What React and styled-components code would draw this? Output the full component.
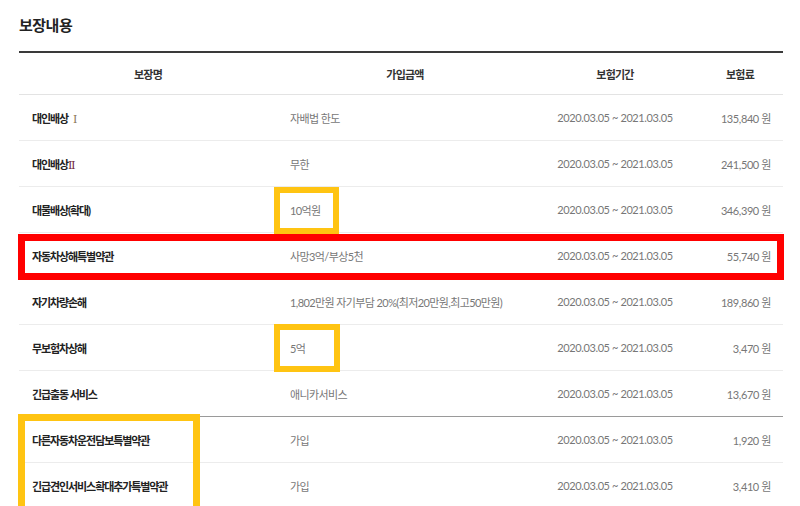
import React from 'react';
import styled, { createGlobalStyle } from 'styled-components';

const GlobalStyle = createGlobalStyle`
  html, body {
    margin: 0;
    padding: 0;
    background: #fff;
    overflow: hidden;
  }
  body {
    font-family: "Lato", "Noto Sans CJK KR", sans-serif;
    color: #333;
  }
`;

const coverages = [
  { name: '대인배상', numeral: 'Ⅰ', spaced: true, amount: '자배법 한도', premium: '135,840' },
  { name: '대인배상', numeral: 'Ⅱ', amount: '무한', premium: '241,500' },
  { name: '대물배상(확대)', amount: '10억원', premium: '346,390' },
  { name: '자동차상해특별약관', amount: '사망3억/부상5천', premium: '55,740' },
  { name: '자기차량손해', amount: '1,802만원 자기부담 20%(최저20만원,최고50만원)', premium: '189,860' },
  { name: '무보험차상해', amount: '5억', premium: '3,470' },
  { name: '긴급출동 서비스', amount: '애니카서비스', premium: '13,670', divider: true },
  { name: '다른자동차운전담보특별약관', amount: '가입', premium: '1,920' },
  { name: '긴급견인서비스확대추가특별약관', amount: '가입', premium: '3,410' },
];

const PERIOD = '2020.03.05 ~ 2021.03.05';

// highlight frames drawn over the table (annotation marks)
const marks = [
  { x: 274, y: 187, w: 65, h: 47, color: '#ffc412', line: 6 },
  { x: 18, y: 234, w: 766, h: 46, color: '#ff0000', line: 7 },
  { x: 274, y: 324, w: 66, h: 48, color: '#ffc412', line: 6 },
  { x: 18, y: 414, w: 182, h: 100, color: '#ffc412', line: 7 },
];

const App = () => (
  <>
    <GlobalStyle />
    <Page>
      <Title>보장내용</Title>
      <Table>
        <colgroup>
          <col style={{ width: 258 }} />
          <col style={{ width: 256 }} />
          <col style={{ width: 164 }} />
          <col style={{ width: 86 }} />
        </colgroup>
        <thead>
          <tr>
            <Th>보장명</Th>
            <Th>가입금액</Th>
            <Th>보험기간</Th>
            <Th>보험료</Th>
          </tr>
        </thead>
        <tbody>
          {coverages.map((row) => (
            <Row key={row.name + (row.numeral || '')} $divider={row.divider}>
              <NameCell>
                {row.name}
                {row.numeral && (
                  <Numeral $spaced={row.spaced}>{row.numeral}</Numeral>
                )}
              </NameCell>
              <AmountCell>{row.amount}</AmountCell>
              <PeriodCell>{PERIOD}</PeriodCell>
              <PremiumCell>{row.premium} 원</PremiumCell>
            </Row>
          ))}
        </tbody>
      </Table>
      {marks.map((m, i) => (
        <Mark key={i} $x={m.x} $y={m.y} $w={m.w} $h={m.h} $color={m.color} $line={m.line} />
      ))}
    </Page>
  </>
);

const Page = styled.div`
  position: relative;
  padding: 14px 17px 0 19px;
`;

const Title = styled.h2`
  margin: 0 0 15px;
  font-size: 15px;
  line-height: 22px;
  font-weight: 700;
  color: #222;
  letter-spacing: -0.5px;
`;

const Table = styled.table`
  width: 764px;
  border-collapse: collapse;
  table-layout: fixed;
  border-top: 2px solid #3a3a3a;
  font-size: 11px;
`;

const Th = styled.th`
  height: 41px;
  padding: 0;
  text-align: center;
  font-weight: 700;
  color: #333;
  letter-spacing: -0.8px;
  border-bottom: 1px solid #e3e3e3;
`;

const Row = styled.tr`
  border-bottom: 1px solid ${(p) => (p.$divider ? '#9a9a9a' : '#ececec')};

  td {
    height: 45px;
    padding: 0;
    vertical-align: middle;
    white-space: nowrap;
  }
`;

const NameCell = styled.td`
  padding-left: 13px !important;
  font-weight: 700;
  color: #222;
  letter-spacing: -1.1px;
`;

const Numeral = styled.span`
  margin-left: ${(p) => (p.$spaced ? '5px' : '0')};
  font-family: "DejaVu Serif", serif;
  font-weight: 400;
  font-size: 11px;
  letter-spacing: 0;
  color: ${(p) => (p.$spaced ? '#8a7554' : '#6e2438')};
`;

const AmountCell = styled.td`
  padding-left: 13px !important;
  color: #777;
  letter-spacing: -0.6px;
`;

const PeriodCell = styled.td`
  text-align: center;
  color: #777;
  letter-spacing: -0.4px;
`;

const PremiumCell = styled.td`
  text-align: right;
  padding-right: 12px !important;
  color: #777;
  letter-spacing: -0.4px;
`;

const Mark = styled.div`
  position: absolute;
  left: ${(p) => p.$x}px;
  top: ${(p) => p.$y}px;
  width: ${(p) => p.$w}px;
  height: ${(p) => p.$h}px;
  box-sizing: border-box;
  border: ${(p) => p.$line}px solid ${(p) => p.$color};
  pointer-events: none;
`;

export default App;
